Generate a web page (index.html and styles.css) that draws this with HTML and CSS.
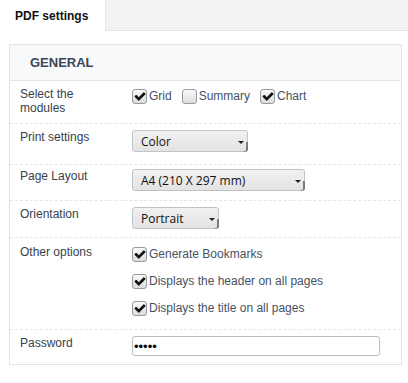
FILE: index.html
```html
<!DOCTYPE html>
<html lang="en">
  <head>
    <meta charset="utf-8" />
    <meta name="viewport" content="width=device-width, initial-scale=1" />
    <title>PDF settings</title>
    <link rel="stylesheet" href="styles.css">
  </head>
  <body>
    <nav class="tabs">
      <div class="tab">PDF settings</div>
    </nav>
    <section class="panel">
      <h2 class="panel-title">GENERAL</h2>
      <div class="row">
        <div class="label">Select the<br>modules</div>
        <div class="field inline-checks">
          <label class="check"><span class="box on"><svg viewBox="40 180 1700 1480"><path d="M1671 566q0 40-28 68l-724 724-136 136q-28 28-68 28t-68-28l-136-136-362-362q-28-28-28-68t28-68l136-136q28-28 68-28t68 28l294 295 656-657q28-28 68-28t68 28l136 136q28 28 28 68z" /></svg></span>Grid</label>
          <label class="check"><span class="box"></span>Summary</label>
          <label class="check"><span class="box on"><svg viewBox="40 180 1700 1480"><path d="M1671 566q0 40-28 68l-724 724-136 136q-28 28-68 28t-68-28l-136-136-362-362q-28-28-28-68t28-68l136-136q28-28 68-28t68 28l294 295 656-657q28-28 68-28t68 28l136 136q28 28 28 68z" /></svg></span>Chart</label>
        </div>
      </div>
      <div class="row row-print">
        <div class="label">Print settings</div>
        <div class="field"><div class="select select-color">Color</div></div>
      </div>
      <div class="row row-layout">
        <div class="label">Page Layout</div>
        <div class="field"><div class="select select-layout">A4 (210 X 297 mm)</div></div>
      </div>
      <div class="row">
        <div class="label">Orientation</div>
        <div class="field"><div class="select select-orientation">Portrait</div></div>
      </div>
      <div class="row row-options">
        <div class="label">Other options</div>
        <div class="field stacked-checks">
          <label class="check"><span class="box on"><svg viewBox="40 180 1700 1480"><path d="M1671 566q0 40-28 68l-724 724-136 136q-28 28-68 28t-68-28l-136-136-362-362q-28-28-28-68t28-68l136-136q28-28 68-28t68 28l294 295 656-657q28-28 68-28t68 28l136 136q28 28 28 68z" /></svg></span>Generate Bookmarks</label>
          <label class="check"><span class="box on"><svg viewBox="40 180 1700 1480"><path d="M1671 566q0 40-28 68l-724 724-136 136q-28 28-68 28t-68-28l-136-136-362-362q-28-28-28-68t28-68l136-136q28-28 68-28t68 28l294 295 656-657q28-28 68-28t68 28l136 136q28 28 28 68z" /></svg></span>Displays the header on all pages</label>
          <label class="check"><span class="box on"><svg viewBox="40 180 1700 1480"><path d="M1671 566q0 40-28 68l-724 724-136 136q-28 28-68 28t-68-28l-136-136-362-362q-28-28-28-68t28-68l136-136q28-28 68-28t68 28l294 295 656-657q28-28 68-28t68 28l136 136q28 28 28 68z" /></svg></span>Displays the title on all pages</label>
        </div>
      </div>
      <div class="row">
        <div class="label">Password</div>
        <div class="field"><input class="password" type="password" value="12345"></div>
      </div>
    </section>
  </body>
</html>
```

FILE: styles.css
```css
body {
  margin: 0;
  background-color: #fff;
  color: #363f4d;
  font-family: "Liberation Sans", Arial, sans-serif;
}

.tabs {
  display: flex;
  height: 30px;
  background-color: #f2f2f2;
  border-bottom: 1px solid #dfe4ea;
}

.tab {
  box-sizing: border-box;
  width: 106px;
  height: 31px;
  padding-left: 15px;
  background-color: #fff;
  border-right: 1px solid #e3e6ea;
  color: #111;
  font-size: 12px;
  font-weight: bold;
  line-height: 32px;
}

.panel {
  margin: 13px 6px 0 9px;
  border: 1px solid #dfe4ea;
}

.panel-title {
  margin: 0;
  height: 35px;
  padding-left: 20px;
  background-color: #f7f9fb;
  border-bottom: 1px solid #e3e8ee;
  color: #3b4656;
  font-size: 13px;
  line-height: 35px;
}

.row {
  display: flex;
  padding: 6px 10px 8px;
  border-bottom: 1px dashed #e2e6ea;
}

.row:last-child {
  border-bottom: none;
}

.row-print {
  padding-bottom: 12px;
}

.row-layout {
  padding-top: 4px;
  padding-bottom: 9px;
}

.row-options {
  padding-top: 7px;
  padding-bottom: 12px;
}

.label {
  flex: none;
  width: 112px;
  font-size: 12px;
  line-height: 14px;
}

.inline-checks {
  display: flex;
  gap: 10px;
}

.stacked-checks {
  display: flex;
  flex-direction: column;
  gap: 9px;
}

.check {
  display: flex;
  align-items: center;
  gap: 2px;
  height: 18px;
  color: #475165;
  font-size: 12px;
}

.box {
  box-sizing: border-box;
  width: 15px;
  height: 15px;
  padding: 1px 0 0 1px;
  border: 1px solid #969a9f;
  border-radius: 3px;
  background: linear-gradient(#fafafa, #dcdcdc);
}

.box svg {
  display: block;
  width: 12px;
  height: 11px;
  fill: #111;
}

.select {
  position: relative;
  box-sizing: border-box;
  display: flex;
  align-items: center;
  height: 22px;
  padding-left: 8px;
  border: 1px solid #bfc3c8;
  border-radius: 3px;
  background: linear-gradient(#f1f1f1, #e3e3e3);
  color: #111;
  font-family: "Open Sans", sans-serif;
  font-size: 12px;
}

.select::after {
  content: "";
  position: absolute;
  right: 3px;
  top: 10px;
  border-left: 3px solid transparent;
  border-right: 3px solid transparent;
  border-top: 3px solid #222;
}

.select::before {
  content: "";
  position: absolute;
  right: -1px;
  bottom: -1px;
  width: 3px;
  height: 9px;
  border-right: 2px solid #7c7c7c;
  border-bottom: 1px solid #9a9a9a;
  border-bottom-right-radius: 3px;
}

.select-color {
  width: 116px;
}

.select-layout {
  width: 173px;
}

.select-orientation {
  width: 87px;
}

.password {
  box-sizing: border-box;
  width: 248px;
  height: 20px;
  margin: 0;
  padding: 0 1px;
  border: 1px solid #b7bcc3;
  border-radius: 3px;
  font-family: "Liberation Sans", Arial, sans-serif;
  font-size: 13px;
}
```
